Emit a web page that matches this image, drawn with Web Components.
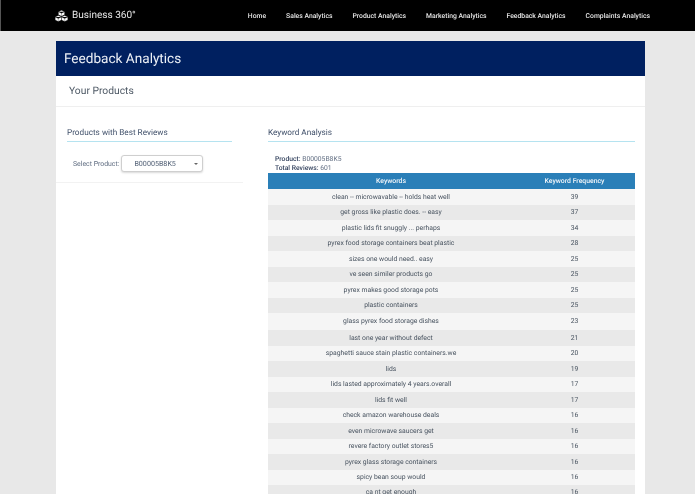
<!DOCTYPE html>
<html>
<head>
<meta charset="utf-8">
<title>Feedback Analytics</title>
<style>
  html, body { margin: 0; height: 494px; overflow: hidden; }
  body { background: #e8e8e8; font-family: Roboto, "Liberation Sans", sans-serif; color: #4b5a70; text-rendering: geometricPrecision; }
  /* the source shot is a soft, upscaled capture */
  top-nav, feedback-page { filter: blur(0.35px); }
</style>
</head>
<body>
<top-nav></top-nav>
<feedback-page></feedback-page>

<script>
class TopNav extends HTMLElement {
  constructor() {
    super();
    this.attachShadow({ mode: 'open' });
    const links = ['Home', 'Sales Analytics', 'Product Analytics', 'Marketing Analytics', 'Feedback Analytics', 'Complaints Analytics'];
    this.shadowRoot.innerHTML = `
      <style>
        :host { display: flex; align-items: center; height: 31px; background: #000; padding: 0 45px 0 54px; border-left: 1px solid #555; }
        .brand { display: flex; align-items: center; gap: 4px; color: #e6e6e6; font-size: 10.05px; }
        svg { width: 13px; height: 12px; }
        nav { margin-left: auto; display: flex; gap: 20px; }
        a { color: #e6e6e6; font-size: 6.8px; font-weight: 500; text-decoration: none; }
      </style>
      <div class="brand">
        <svg viewBox="0 0 13 12" fill="#fff" stroke="#000" stroke-width=".3">
          <path d="M6.5 .2 9.6 1.7 9.6 4.8 6.5 6.3 3.4 4.8 3.4 1.7ZM3.4 1.7 6.5 3.2 9.6 1.7M6.5 3.2V6.3"/>
          <path d="M3.3 5.5 6.4 7 6.4 10.1 3.3 11.6 .2 10.1 .2 7ZM.2 7 3.3 8.5 6.4 7M3.3 8.5V11.6"/>
          <path d="M9.7 5.5 12.8 7 12.8 10.1 9.7 11.6 6.6 10.1 6.6 7ZM6.6 7 9.7 8.5 12.8 7M9.7 8.5V11.6"/>
        </svg>
        <span>Business 360°</span>
      </div>
      <nav>${links.map(l => `<a href="#">${l}</a>`).join('')}</nav>
    `;
  }
}

class SectionCard extends HTMLElement {
  constructor() {
    super();
    this.attachShadow({ mode: 'open' });
    this.shadowRoot.innerHTML = `
      <style>
        :host { display: block; }
        h3 { margin: 0; height: 20px; line-height: 24px; font-size: 8.2px; font-weight: 400; color: #3f4f69; border-bottom: 1px solid #b5e3f0; }
      </style>
      <h3>${this.getAttribute('heading')}</h3>
      <slot></slot>
    `;
  }
}

class ProductSelect extends HTMLElement {
  constructor() {
    super();
    this.attachShadow({ mode: 'open' });
    this.shadowRoot.innerHTML = `
      <style>
        :host { display: flex; align-items: center; gap: 2px; padding-left: 6px; font-size: 6.9px; color: #5f6c80; }
        .box { width: 82px; height: 17px; box-sizing: border-box; display: flex; align-items: center; justify-content: space-between; padding: 0 4px 0 12px; background: #fff; border: 1px solid #cfcfcf; border-radius: 3px; box-shadow: 0 1px 2px rgba(0,0,0,.15); font-size: 7.15px; color: #4b5a70; }
        i { border: 2px solid transparent; border-top: 2.5px solid #666; border-bottom: 0; }
      </style>
      <span>Select Product:</span>
      <div class="box"><span>B00005B8K5</span><i></i></div>
    `;
  }
}

class KeywordTable extends HTMLElement {
  constructor() {
    super();
    this.attachShadow({ mode: 'open' });
    const rows = [
      ['clean -- microwavable -- holds heat well', 39],
      ['get gross like plastic does. -- easy', 37],
      ['plastic lids fit snuggly ... perhaps', 34],
      ['pyrex food storage containers beat plastic', 28],
      ['sizes one would need.. easy', 25],
      ['ve seen similer products go', 25],
      ['pyrex makes good storage pots', 25],
      ['plastic containers', 25],
      ['glass pyrex food storage dishes', 23],
      ['last one year without defect', 21],
      ['spaghetti sauce stain plastic containers.we', 20],
      ['lids', 19],
      ['lids lasted approximately 4 years.overall', 17],
      ['lids fit well', 17],
      ['check amazon warehouse deals', 16],
      ['even microwave saucers get', 16],
      ['revere factory outlet stores5', 16],
      ['pyrex glass storage containers', 16],
      ['spicy bean soup would', 16],
      ['ca nt get enough', 16]
    ];
    this.shadowRoot.innerHTML = `
      <style>
        :host { display: block; font-size: 6.8px; }
        table { width: 100%; border-collapse: collapse; table-layout: fixed; }
        th { background: #2a7fb8; color: #f2f6fa; font-size: 6.85px; font-weight: 500; height: 16px; padding: 0; }
        td { height: 15px; padding: 0 0 .5px; text-align: center; color: #47525f; }
        tr:nth-child(odd) td { background: #f5f5f5; }
        tr:nth-child(even) td { background: #e9e9e9; }
        tr.tall td { height: 16.5px; }
        tr:last-child td { height: 13px; }
        th:first-child { width: 246px; }
      </style>
      <table>
        <thead><tr><th>Keywords</th><th>Keyword Frequency</th></tr></thead>
        <tbody>
          ${rows.map((r, i) => `<tr class="${i === 8 ? 'tall' : ''}"><td>${r[0]}</td><td>${r[1]}</td></tr>`).join('')}
        </tbody>
      </table>
    `;
  }
}

class FeedbackPage extends HTMLElement {
  constructor() {
    super();
    this.attachShadow({ mode: 'open' });
    this.shadowRoot.innerHTML = `
      <style>
        :host { display: block; margin: 10px 50px 0 56px; background: #fff; height: 453px; overflow: hidden; }
        h1 { margin: 0; height: 35px; line-height: 37px; padding-left: 8px; background: #002060; color: #edf1f7; font-size: 13.6px; font-weight: 400; }
        h2 { margin: 0; height: 30px; line-height: 30px; padding-left: 13px; font-size: 10.3px; font-weight: 400; color: #4f5a66; border-bottom: 1px solid #efefef; }
        .cols { display: flex; }
        .left { width: 187px; box-sizing: border-box; padding: 14px 11px 10px; border-bottom: 1px solid #f2f2f2; align-self: flex-start; }
        .right { flex: 1; padding: 14px 10px 0 25px; }
        product-select { margin-top: 13px; }
        .meta { padding: 13px 0 0 7px; font-size: 6.75px; line-height: 9px; color: #5f6c80; }
        .meta b { color: #33425e; font-weight: 500; }
      </style>
      <h1>Feedback Analytics</h1>
      <h2>Your Products</h2>
      <div class="cols">
        <div class="left">
          <section-card heading="Products with Best Reviews">
            <product-select></product-select>
          </section-card>
        </div>
        <div class="right">
          <section-card heading="Keyword Analysis">
            <div class="meta"><b>Product:</b> B00005B8K5<br><b>Total Reviews:</b> 601</div>
            <keyword-table></keyword-table>
          </section-card>
        </div>
      </div>
    `;
  }
}

customElements.define('top-nav', TopNav);
customElements.define('section-card', SectionCard);
customElements.define('product-select', ProductSelect);
customElements.define('keyword-table', KeywordTable);
customElements.define('feedback-page', FeedbackPage);
</script>
</body>
</html>
